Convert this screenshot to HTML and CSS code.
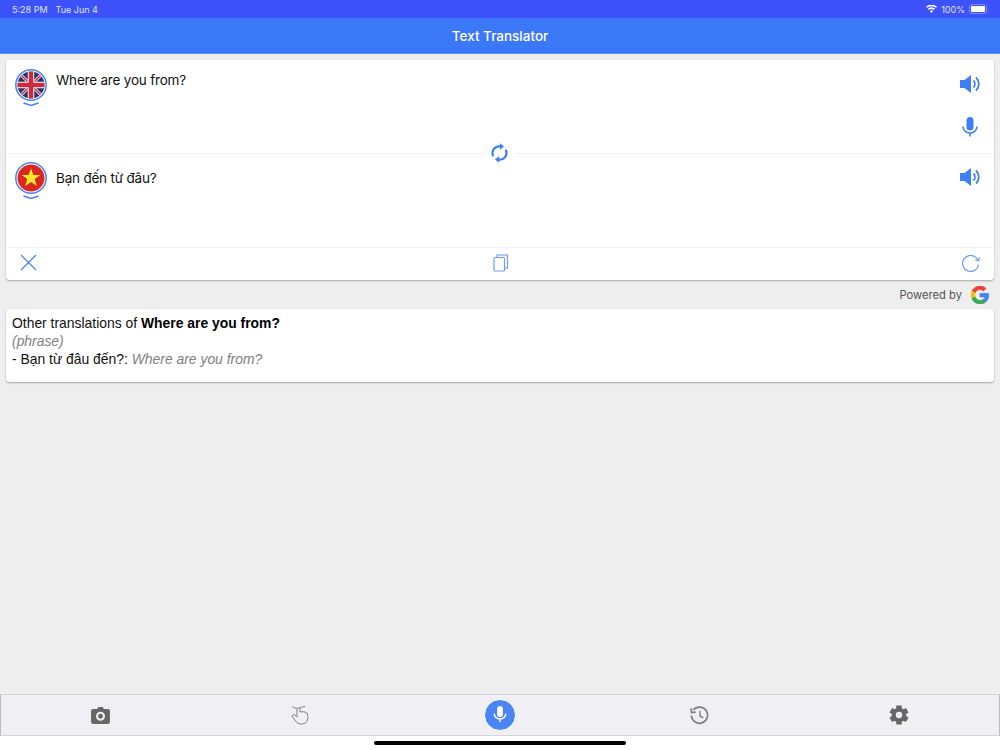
FILE: index.html
```html
<!DOCTYPE html>
<html lang="en">
<head>
    <meta charset="UTF-8">
    <title>Text Translator</title>
    <link rel="stylesheet" href="styles.css">
</head>
<body>

<div class="status-bar">
    <span class="status-time">5:28 PM</span>
    <span class="status-date">Tue Jun 4</span>
    <span class="status-right">
        <svg class="wifi" viewBox="0 0 14 10" width="11" height="8"><path d="M7 10 4.9 7.600a3 3 0 0 1 4.200 0ZM3.700 6.300 2.400 4.800a7 7 0 0 1 9.200 0l-1.300 1.500a5 5 0 0 0-6.600 0ZM1.200 3.500 0 2.100a10.600 10.600 0 0 1 14 0l-1.200 1.400a9 9 0 0 0-11.600 0Z" fill="#fff"/></svg>
        <span>100%</span>
        <span class="battery"><span class="battery-fill"></span></span>
    </span>
</div>

<header class="title-bar">Text Translator</header>

<main class="content">
    <section class="card translator">
        <div class="lang-row source">
            <svg class="flag" viewBox="0 0 32 38" width="32" height="38">
                <defs><clipPath id="uk"><circle cx="16" cy="16" r="13.500"/></clipPath></defs>
                <circle cx="16" cy="16" r="15.200" fill="#fff" stroke="#4a80f0" stroke-width="1.500"/>
                <g clip-path="url(#uk)">
                    <rect width="32" height="32" fill="#27346f"/>
                    <path d="M2 2 30 30M30 2 2 30" stroke="#fff" stroke-width="3"/>
                    <path d="M2 2 30 30M30 2 2 30" stroke="#d0283c" stroke-width="1.500"/>
                    <path d="M16 0V32M0 16H32" stroke="#fff" stroke-width="6.500"/>
                    <path d="M16 0V32M0 16H32" stroke="#d0283c" stroke-width="4.500"/>
                </g>
                <path d="M8.500 34 16 36.500 23.500 34" fill="none" stroke="#4a80f0" stroke-width="1.500"/>
            </svg>
            <p class="lang-text">Where are you from?</p>
            <div class="row-actions">
                <svg class="icon" viewBox="0 0 22 22" width="22" height="22"><use href="#speaker"/></svg>
                <svg class="icon mic" viewBox="0 0 22 24" width="22" height="24"><use href="#mic"/></svg>
            </div>
        </div>

        <div class="lang-row target">
            <svg class="flag" viewBox="0 0 32 38" width="32" height="38">
                <circle cx="16" cy="16" r="15.200" fill="#fff" stroke="#4a80f0" stroke-width="1.500"/>
                <circle cx="16" cy="16" r="13.500" fill="#d8281f"/>
                <path d="M16 6.500 18.400 13H25.200L19.700 17.100 21.800 24 16 20 10.200 24 12.300 17.100 6.800 13H13.600Z" fill="#fde82c"/>
                <path d="M8.500 34 16 36.500 23.500 34" fill="none" stroke="#4a80f0" stroke-width="1.500"/>
            </svg>
            <p class="lang-text">Bạn đến từ đâu?</p>
            <div class="row-actions">
                <svg class="icon" viewBox="0 0 22 22" width="22" height="22"><use href="#speaker"/></svg>
            </div>
            <span class="swap">
                <svg viewBox="0 0 20 22" width="19" height="20" fill="none" stroke="#3f7ff5" stroke-width="2.400">
                    <path d="M3.200 14.500A7.200 7.200 0 0 1 10 3.800h1.500"/>
                    <path d="M16.800 7.500A7.200 7.200 0 0 1 10 18.200H8.500"/>
                    <path d="M10.500 0.300 15 3.800 10.500 7.300Z" fill="#3f7ff5" stroke="none"/>
                    <path d="M9.500 14.700 5 18.200 9.500 21.700Z" fill="#3f7ff5" stroke="none"/>
                </svg>
            </span>
        </div>

        <div class="tool-row">
            <svg viewBox="0 0 20 18" width="20" height="18" fill="none" stroke="#4a80f0" stroke-width="1.200"><path d="M1 1 16 16M16 1 1 16"/></svg>
            <svg viewBox="0 0 16 18" width="16" height="18" fill="none" stroke="#6d9bf5" stroke-width="1.200"><rect x="1" y="3.500" width="10.500" height="13.500" rx="1"/><path d="M4 3.500V1H14.500V14H11.500"/></svg>
            <svg viewBox="0 0 20 18" width="20" height="18" fill="none" stroke="#6d9bf5" stroke-width="1.200"><path d="M17.500 10.500A8 8 0 1 1 14.500 3.100L17.500 6"/><path d="M18.500 3.200 17.800 6.500 14.300 6.200"/></svg>
        </div>
    </section>

    <div class="powered">
        <span>Powered by</span>
        <svg viewBox="0 0 48 48" width="18" height="18" stroke-width="2">
            <path fill="#ea4335" stroke="#ea4335" d="M24 9.500c3.900 0 6.900 1.600 9.100 3.600l6.700-6.600C35.700 2.700 30.300 0 24 0 14.600 0 6.600 5.400 2.600 13.200l7.900 6.100C12.400 13.700 17.700 9.500 24 9.500z"/>
            <path fill="#fbbc05" stroke="#fbbc05" d="M10.500 28.700A14.500 14.500 0 0 1 9.700 24c0-1.600.3-3.200.8-4.700l-7.900-6.100A24 24 0 0 0 0 24c0 3.900.9 7.500 2.600 10.800l7.900-6.100z"/>
            <path fill="#34a853" stroke="#34a853" d="M24 48c6.500 0 11.900-2.100 15.900-5.800l-7.700-6c-2.200 1.400-4.900 2.300-8.200 2.300-6.300 0-11.600-4.200-13.500-9.800l-7.900 6.100C6.600 42.600 14.600 48 24 48z"/>
            <path fill="#4285f4" stroke="#4285f4" d="M47 24.500c0-1.600-.1-3.100-.4-4.500H24v9h12.900c-.6 3-2.200 5.500-4.700 7.200l7.700 6C44.400 38 47 31.800 47 24.500z"/>
        </svg>
    </div>

    <section class="card other">
        <div>Other translations of <b>Where are you from?</b></div>
        <div class="muted">(phrase)</div>
        <div>- Bạn từ đâu đến?: <span class="muted">Where are you from?</span></div>
    </section>
</main>

<nav class="tab-bar">
    <svg viewBox="0 0 20 18" width="19" height="17"><path fill="#666" fill-rule="evenodd" d="M6.500 2 7.300.6C7.500.2 7.800 0 8.200 0h3.600c.4 0 .7.200.9.600L13.500 2H18c1.100 0 2 .9 2 2v12c0 1.100-.9 2-2 2H2c-1.100 0-2-.9-2-2V4c0-1.100.9-2 2-2ZM10 5a4.800 4.800 0 1 0 0 9.600A4.800 4.800 0 0 0 10 5Zm0 2.200a2.600 2.600 0 1 1 0 5.200 2.600 2.600 0 0 1 0-5.200Z"/></svg>
    <svg viewBox="0 0 18 20" width="18" height="20" fill="none" stroke="#808080" stroke-width="1"><path d="M1 1.500C3 3 5 3.500 8 3 10 2.700 12 1.500 14 1.500"/><path d="M6 4V12L3.500 10C2 9 .5 10.500 1.500 12L5 16.500C7 19.500 12 19.800 15 17.500 17.500 15 17 10.500 16 8 14 6.500 11 6.500 9 7V3.500"/></svg>
    <span class="mic-button">
        <svg viewBox="0 0 22 24" width="18" height="20"><use href="#mic-white"/></svg>
    </span>
    <svg viewBox="0 0 20 20" width="19" height="19" fill="none" stroke="#808080" stroke-width="1.800"><path d="M3.400 4.300A8.500 8.500 0 1 1 1.500 10"/><path d="M1 2.500 1.500 7 6 6.500" stroke-width="1.700"/><path d="M10.500 5V10.500L14 12.500" stroke-width="1.500"/></svg>
    <svg viewBox="0 0 20 20" width="20" height="20" fill="#666">
        <circle cx="10" cy="10" r="7.300"/>
        <rect x="7.300" y="0.500" width="5.400" height="4"/>
        <rect x="7.300" y="0.500" width="5.400" height="4" transform="rotate(60 10 10)"/>
        <rect x="7.300" y="0.500" width="5.400" height="4" transform="rotate(120 10 10)"/>
        <rect x="7.300" y="0.500" width="5.400" height="4" transform="rotate(180 10 10)"/>
        <rect x="7.300" y="0.500" width="5.400" height="4" transform="rotate(240 10 10)"/>
        <rect x="7.300" y="0.500" width="5.400" height="4" transform="rotate(300 10 10)"/>
        <circle cx="10" cy="10" r="3.200" fill="#efeff4"/>
    </svg>
</nav>

<div class="home-area"><span class="home-indicator"></span></div>

<svg class="defs" width="0" height="0">
    <symbol id="speaker" viewBox="0 0 22 22">
        <path fill="#3f7ff5" d="M1 7H5.500L12 2V20L5.500 15H1Z"/>
        <path fill="none" stroke="#3f7ff5" stroke-width="1.800" d="M14.500 7.500A5 5 0 0 1 14.500 14.500M17 4.500A9 9 0 0 1 17 17.500"/>
    </symbol>
    <symbol id="mic" viewBox="0 0 22 24">
        <rect x="7.500" y="1" width="7" height="13.500" rx="3.500" fill="#3f7ff5"/>
        <path fill="none" stroke="#3f7ff5" stroke-width="1.600" d="M4 10.500A7 6.500 0 0 0 18 10.500M11 17V20.500"/>
    </symbol>
    <symbol id="mic-white" viewBox="0 0 22 24">
        <rect x="7.500" y="1" width="7" height="13.500" rx="3.500" fill="#fff"/>
        <path fill="none" stroke="#fff" stroke-width="1.800" d="M4 10.500A7 6.500 0 0 0 18 10.500M11 17V20.500"/>
    </symbol>
</svg>

</body>
</html>
```
FILE: styles.css
```css
* {
    box-sizing: border-box;
}
html, body {
    height: 100%;
}
body {
    margin: 0;
    width: 1000px;
    height: 750px;
    overflow: hidden;
    display: flex;
    flex-direction: column;
    background-color: #eeeeee;
    color: #111111;
    font-family: Inter, "Liberation Sans", sans-serif;
}
.status-bar {
    height: 18px;
    flex-shrink: 0;
    display: flex;
    align-items: center;
    padding: 0 13px 0 12px;
    background-color: #3e52fb;
    color: #dfe4ff;
    font-size: 9px;
}
.status-date {
    margin-left: 8px;
}
.status-right {
    margin-left: auto;
    display: flex;
    align-items: center;
    gap: 4px;
}
.battery {
    display: block;
    width: 18px;
    height: 10px;
    padding: 1px;
    border: 1px solid #7f8dfc;
    border-radius: 3px;
}
.battery-fill {
    display: block;
    height: 100%;
    background-color: #ffffff;
    border-radius: 1px;
}
.title-bar {
    height: 36px;
    flex-shrink: 0;
    display: flex;
    align-items: center;
    justify-content: center;
    padding-top: 1px;
    background-color: #3a78f8;
    color: #ffffff;
    font-size: 13.500px;
    font-weight: 500;
    border-bottom: 1px solid #5f92f9;
}
.content {
    flex: 1;
    padding: 6px 6px 0;
}
.card {
    background-color: #ffffff;
    border-radius: 4px;
    box-shadow: 0 1px 2px rgba(0, 0, 0, 0.3);
}
.translator {
    height: 220px;
    display: flex;
    flex-direction: column;
}
.lang-row {
    height: 94px;
    position: relative;
    display: flex;
    padding: 9px 13px 0 9px;
    border-bottom: 1px solid #efefef;
}
.target {
    padding-top: 8px;
}
.flag {
    flex-shrink: 0;
}
.lang-text {
    flex: 1;
    margin: 2px 0 0 9px;
    font-size: 13.500px;
    letter-spacing: -0.2px;
    line-height: 18px;
}
.target .lang-text {
    margin-top: 7px;
}
.row-actions {
    display: flex;
    flex-direction: column;
    gap: 21px;
    padding-top: 4px;
}
.swap {
    position: absolute;
    left: 477px;
    top: -12px;
    width: 32px;
    height: 22px;
    display: flex;
    align-items: center;
    justify-content: center;
    background-color: #ffffff;
}
.tool-row {
    flex: 1;
    display: flex;
    align-items: center;
    justify-content: space-between;
    padding: 0 13px 2px 14px;
}
.powered {
    height: 29px;
    display: flex;
    align-items: center;
    justify-content: flex-end;
    gap: 9px;
    padding-right: 5px;
    color: #555555;
    font-size: 11.200px;
}
.other {
    height: 73px;
    padding: 5px 6px;
    font-family: "Liberation Sans", Arial, sans-serif;
    font-size: 13.900px;
    line-height: 18px;
}
.other b {
    color: #000000;
}
.muted {
    color: #808080;
    font-style: italic;
}
.tab-bar {
    height: 42px;
    flex-shrink: 0;
    display: grid;
    grid-template-columns: repeat(5, 1fr);
    align-items: center;
    justify-items: center;
    background-color: #efeff4;
    border: 1px solid #d6d6da;
    border-left-color: #bcbcc0;
    border-right-color: #bcbcc0;
}
.mic-button {
    width: 32px;
    height: 32px;
    display: flex;
    align-items: center;
    justify-content: center;
    border-radius: 50%;
    background-color: #4a84f5;
    border: 1px solid #ffffff;
}
.home-area {
    height: 14px;
    flex-shrink: 0;
    display: flex;
    justify-content: center;
    padding-top: 5px;
    background-color: #ffffff;
}
.home-indicator {
    display: block;
    width: 252px;
    height: 4px;
    border-radius: 2px;
    background-color: #000000;
}
.defs {
    position: absolute;
}
```
